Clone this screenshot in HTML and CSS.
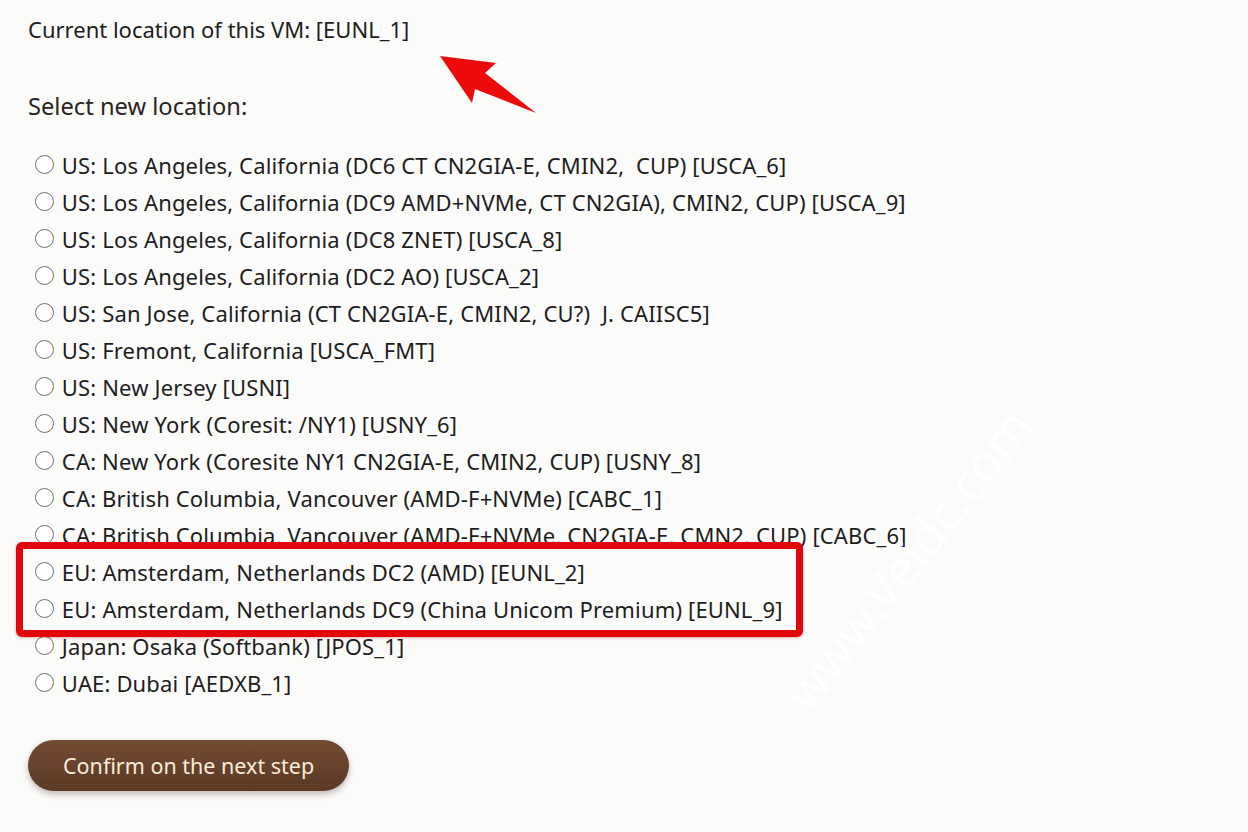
FILE: index.html
```html
<!DOCTYPE html>
<html lang="en">
  <head>
    <meta charset="UTF-8" />
    <title>Migrate VM</title>
    <link rel="stylesheet" href="styles.css">
  </head>
  <body>
    <div class="page">
      <p class="current">Current location of this VM: [EUNL_1]</p>

      <svg class="arrow" width="110" height="70" viewBox="0 0 110 70">
        <polygon points="3,3 59,10 48,20 99,60 38,36 35,50" fill="#ec0a0a" />
      </svg>

      <form class="migrate">
        <p class="select-label">Select new location:</p>

        <div class="locations">
          <label class="loc"><input type="radio" name="loc" value="USCA_6" /> US: Los Angeles, California (DC6 CT CN2GIA-E, CMIN2,&nbsp; CUP) [USCA_6]</label>
          <label class="loc"><input type="radio" name="loc" value="USCA_9" /> US: Los Angeles, California (DC9 AMD+NVMe, CT CN2GIA), CMIN2, CUP) [USCA_9]</label>
          <label class="loc"><input type="radio" name="loc" value="USCA_8" /> US: Los Angeles, California (DC8 ZNET) [USCA_8]</label>
          <label class="loc"><input type="radio" name="loc" value="USCA_2" /> US: Los Angeles, California (DC2 AO) [USCA_2]</label>
          <label class="loc"><input type="radio" name="loc" value="USCA_5" /> US: San Jose, California (CT CN2GIA-E, CMIN2, CU?)&nbsp; J. CAIISC5]</label>
          <label class="loc"><input type="radio" name="loc" value="USCA_FMT" /> US: Fremont, California [USCA_FMT]</label>
          <label class="loc"><input type="radio" name="loc" value="USNJ" /> US: New Jersey [USNI]</label>
          <label class="loc"><input type="radio" name="loc" value="USNY_6" /> US: New York (Coresit: /NY1) [USNY_6]</label>
          <label class="loc"><input type="radio" name="loc" value="USNY_8" /> CA: New York (Coresite NY1 CN2GIA-E, CMIN2, CUP) [USNY_8]</label>
          <label class="loc"><input type="radio" name="loc" value="CABC_1" /> CA: British Columbia, Vancouver (AMD-F+NVMe) [CABC_1]</label>
          <label class="loc"><input type="radio" name="loc" value="CABC_6" /> CA: British Columbia, Vancouver (AMD-F+NVMe, CN2GIA-E, CMN2, CUP) [CABC_6]</label>

          <div class="highlight">
            <label class="loc"><input type="radio" name="loc" value="EUNL_2" /> EU: Amsterdam, Netherlands DC2 (AMD) [EUNL_2]</label>
            <label class="loc"><input type="radio" name="loc" value="EUNL_9" /> EU: Amsterdam, Netherlands DC9 (China Unicom Premium) [EUNL_9]</label>
          </div>

          <label class="loc"><input type="radio" name="loc" value="JPOS_1" /> Japan: Osaka (Softbank) [JPOS_1]</label>
          <label class="loc"><input type="radio" name="loc" value="AEDXB_1" /> UAE: Dubai [AEDXB_1]</label>
        </div>

        <button type="button" class="confirm">Confirm on the next step</button>
      </form>

      <div class="watermark">www.Veidc.com</div>
    </div>
  </body>
</html>
```

FILE: styles.css
```css
html {
  font-family: "Noto Sans", "Open Sans", sans-serif;
}
body {
  margin: 0;
  background-color: #fbfbfa;
  color: #1d1d1d;
}
.page {
  position: relative;
  min-height: 832px;
  padding: 14px 0 0 28px;
  box-sizing: border-box;
  overflow: hidden;
}
.current {
  margin: 0;
  font-size: 22px;
  line-height: 30px;
}
.arrow {
  position: absolute;
  left: 437px;
  top: 53px;
}
.select-label {
  margin: 46px 0 0;
  font-size: 23.7px;
  line-height: 32px;
  color: #2a241e;
}
.locations {
  margin-top: 24px;
}
.loc {
  display: flex;
  align-items: center;
  height: 37px;
  font-size: 22px;
  letter-spacing: 0.15px;
  white-space: pre;
}
.loc input {
  appearance: none;
  width: 19px;
  height: 19px;
  margin: 0 2px 0 7px;
  border: 1.5px solid #6f6f6f;
  border-radius: 50%;
  background: #fff;
  flex-shrink: 0;
}
.highlight {
  position: relative;
}
.highlight::after {
  content: "";
  position: absolute;
  left: -12px;
  top: -11px;
  width: 787px;
  height: 95px;
  box-sizing: border-box;
  border: 7px solid #e1060b;
  border-radius: 6px;
  box-shadow: 0 1px 3px rgba(150, 0, 0, 0.3);
  pointer-events: none;
}
.confirm {
  display: inline-flex;
  align-items: center;
  margin-top: 39px;
  height: 51px;
  padding: 0 35px;
  border: none;
  border-radius: 26px;
  background: linear-gradient(#744b33, #5a3925);
  color: #f8ecd8;
  font-family: inherit;
  font-size: 21.5px;
  box-shadow: 0 3px 6px rgba(60, 30, 10, 0.3);
}
.watermark {
  position: absolute;
  left: 725px;
  top: 525px;
  font-size: 50px;
  color: rgba(255, 255, 255, 0.9);
  transform: rotate(-52deg);
  white-space: nowrap;
  pointer-events: none;
}
```
